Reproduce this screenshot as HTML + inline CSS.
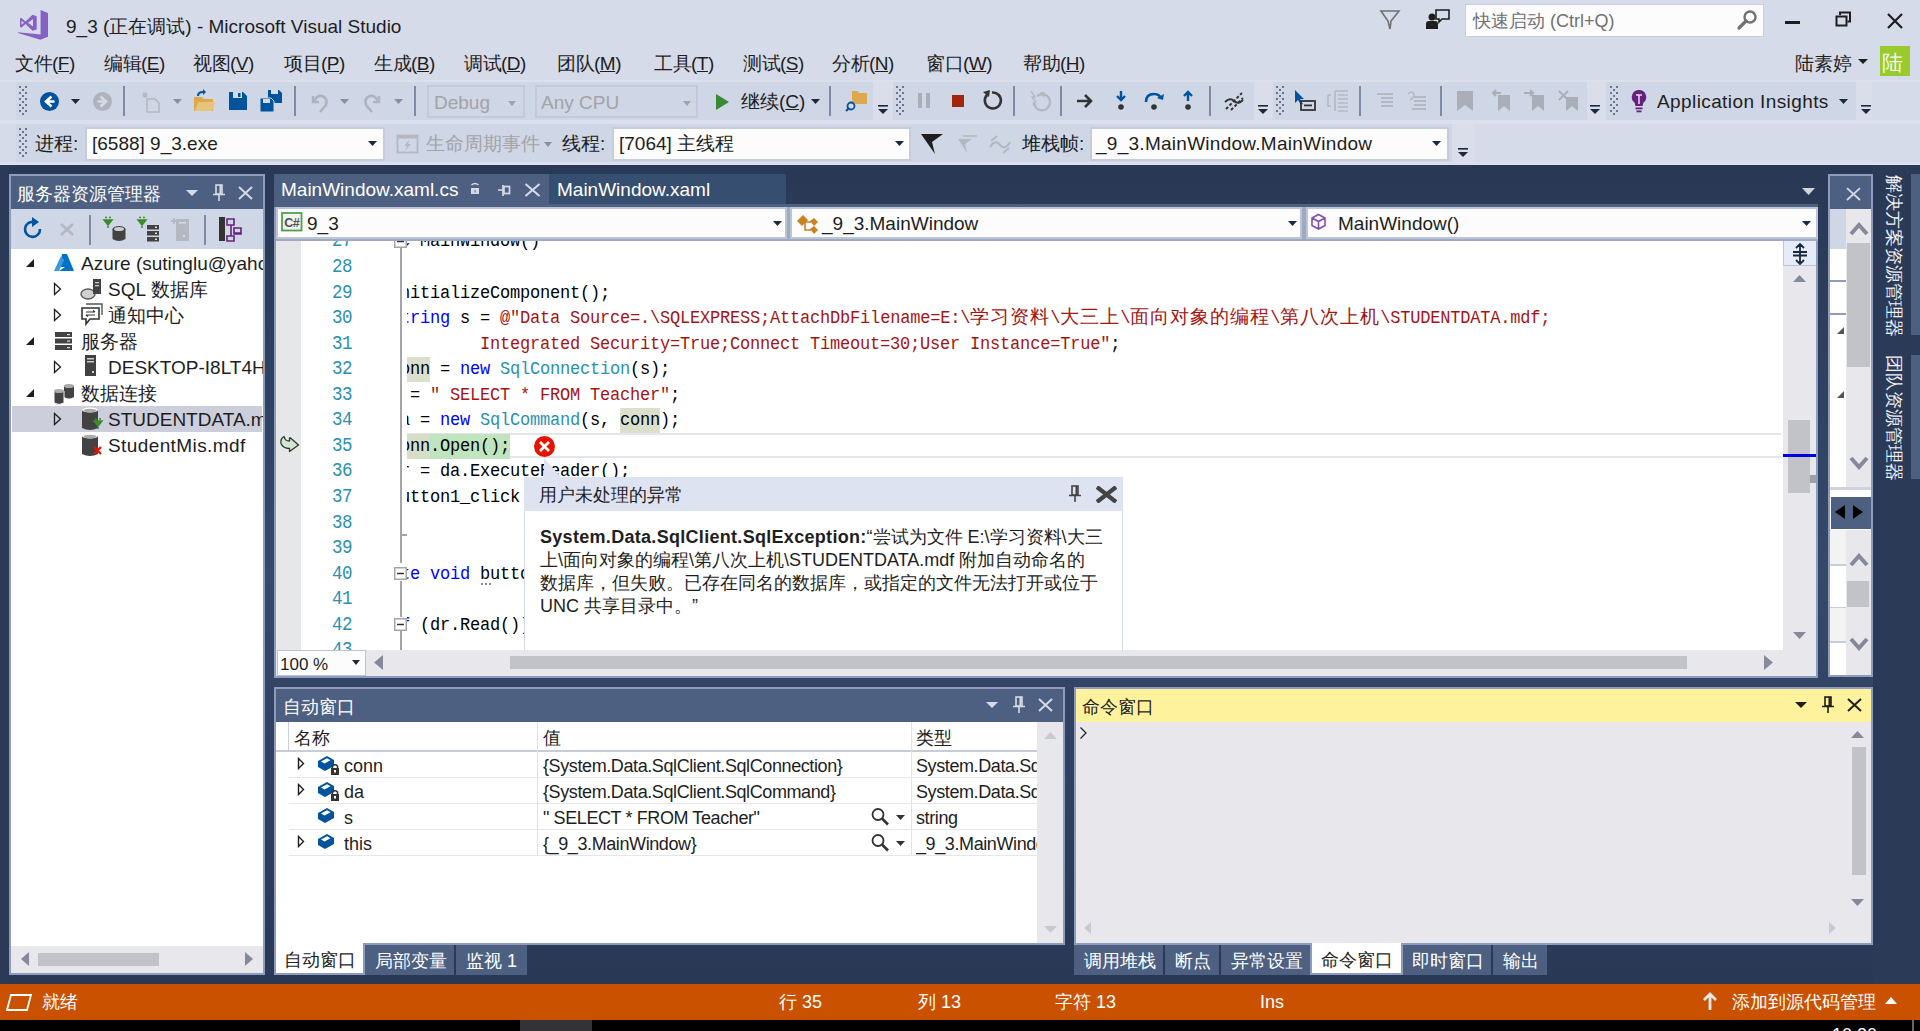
<!DOCTYPE html><html><head><meta charset="utf-8"><style>
html,body{margin:0;padding:0}
body{width:1920px;height:1031px;position:relative;overflow:hidden;background:#D6DBE9;font-family:'Liberation Sans',sans-serif}
body div, body svg{position:absolute}
.clip{overflow:hidden}
</style></head><body>
<div style="left:0px;top:165px;width:1920px;height:819px;background:linear-gradient(#293955 0%,#35496A 50%,#293955 100%);"></div>
<div style="left:0px;top:165px;width:9px;height:819px;background:#2A3A57;"></div>
<div style="left:1873px;top:165px;width:47px;height:819px;background:#2A3A57;"></div>
<div style="left:0px;top:984px;width:1920px;height:36px;background:#CA5100;"></div>
<div style="left:0px;top:1020px;width:1920px;height:11px;background:#000;"></div>
<div style="left:520px;top:1020px;width:72px;height:11px;background:#333337;"></div>
<svg style="left:14px;top:6px;" width="40" height="40" viewBox="0 0 40 40"><path fill="#8661C5" d="M26.6,4 L34,7 L34,30.7 L26.4,33.8 L4,27 L4.3,26.2 L26.6,28.5 Z"/><path fill="#8661C5" fill-rule="evenodd" d="M6,12.5 L7.5,12 L11.5,15.5 L18.5,8.8 L22.7,10.3 L22.7,23.5 L18.5,24.8 L11.5,18 L7.5,21.5 L6,21 Z M7.5,14.8 L10,16.8 L7.5,18.8 Z M14,16.8 L19,13 L19,20.5 Z"/></svg>
<div style="left:66px;top:16.92px;font-size:19px;line-height:19px;color:#1E1E1E;white-space:pre;">9_3 (正在调试) - Microsoft Visual Studio</div>
<svg style="left:1378px;top:8px;" width="24" height="24" viewBox="0 0 24 24"><path d="M3,3 L21,3 L13,13 L12,21 L10,13 Z" fill="none" stroke="#717171" stroke-width="1.6"/></svg>
<svg style="left:1425px;top:8px;" width="26" height="22" viewBox="0 0 26 22"><circle cx="7" cy="9" r="3.5" fill="#1E1E1E"/><path d="M1,21 L1,16 Q1,13 4,13 L10,13 Q13,13 13,16 L13,21 Z" fill="#1E1E1E"/><path d="M11,2 L24,2 L24,11 L17,11 L14,14 L14,11 L11,11 Z" fill="none" stroke="#1E1E1E" stroke-width="1.6"/></svg>
<div style="left:1465px;top:4px;width:299px;height:33px;background:#FCFCFC;box-sizing:border-box;border:1.5px solid #C9CEDC"></div>
<div style="left:1473px;top:11.76px;font-size:18px;line-height:18px;color:#717171;white-space:pre;">快速启动 (Ctrl+Q)</div>
<svg style="left:1736px;top:9px;" width="24" height="22" viewBox="0 0 24 22"><circle cx="14" cy="8" r="5.5" fill="none" stroke="#717171" stroke-width="2.4"/><path d="M10,12 L3,19" stroke="#717171" stroke-width="3.2" stroke-linecap="round"/></svg>
<div style="left:1785px;top:21px;width:15px;height:3px;background:#1E1E1E;"></div>
<svg style="left:1834px;top:10px;" width="20" height="18" viewBox="0 0 20 18"><rect x="2.5" y="6.5" width="10" height="9" fill="none" stroke="#1E1E1E" stroke-width="2"/><path d="M6,5 L6,2.5 L16,2.5 L16,11.5 L13.5,11.5" fill="none" stroke="#1E1E1E" stroke-width="2"/></svg>
<svg style="left:1885px;top:11px;" width="20" height="20" viewBox="0 0 20 20"><path d="M3,3 L17,17 M17,3 L3,17" stroke="#1E1E1E" stroke-width="2.2"/></svg>
<div style="left:15px;top:54.42px;font-size:19px;line-height:19px;color:#1E1E1E;white-space:pre;letter-spacing:-0.5px">文件(<u style="text-underline-offset:1px;text-decoration-thickness:1px">F</u>)</div>
<div style="left:104px;top:54.42px;font-size:19px;line-height:19px;color:#1E1E1E;white-space:pre;letter-spacing:-0.5px">编辑(<u style="text-underline-offset:1px;text-decoration-thickness:1px">E</u>)</div>
<div style="left:193px;top:54.42px;font-size:19px;line-height:19px;color:#1E1E1E;white-space:pre;letter-spacing:-0.5px">视图(<u style="text-underline-offset:1px;text-decoration-thickness:1px">V</u>)</div>
<div style="left:284px;top:54.42px;font-size:19px;line-height:19px;color:#1E1E1E;white-space:pre;letter-spacing:-0.5px">项目(<u style="text-underline-offset:1px;text-decoration-thickness:1px">P</u>)</div>
<div style="left:374px;top:54.42px;font-size:19px;line-height:19px;color:#1E1E1E;white-space:pre;letter-spacing:-0.5px">生成(<u style="text-underline-offset:1px;text-decoration-thickness:1px">B</u>)</div>
<div style="left:464px;top:54.42px;font-size:19px;line-height:19px;color:#1E1E1E;white-space:pre;letter-spacing:-0.5px">调试(<u style="text-underline-offset:1px;text-decoration-thickness:1px">D</u>)</div>
<div style="left:557px;top:54.42px;font-size:19px;line-height:19px;color:#1E1E1E;white-space:pre;letter-spacing:-0.5px">团队(<u style="text-underline-offset:1px;text-decoration-thickness:1px">M</u>)</div>
<div style="left:654px;top:54.42px;font-size:19px;line-height:19px;color:#1E1E1E;white-space:pre;letter-spacing:-0.5px">工具(<u style="text-underline-offset:1px;text-decoration-thickness:1px">T</u>)</div>
<div style="left:743px;top:54.42px;font-size:19px;line-height:19px;color:#1E1E1E;white-space:pre;letter-spacing:-0.5px">测试(<u style="text-underline-offset:1px;text-decoration-thickness:1px">S</u>)</div>
<div style="left:832px;top:54.42px;font-size:19px;line-height:19px;color:#1E1E1E;white-space:pre;letter-spacing:-0.5px">分析(<u style="text-underline-offset:1px;text-decoration-thickness:1px">N</u>)</div>
<div style="left:926px;top:54.42px;font-size:19px;line-height:19px;color:#1E1E1E;white-space:pre;letter-spacing:-0.5px">窗口(<u style="text-underline-offset:1px;text-decoration-thickness:1px">W</u>)</div>
<div style="left:1023px;top:54.42px;font-size:19px;line-height:19px;color:#1E1E1E;white-space:pre;letter-spacing:-0.5px">帮助(<u style="text-underline-offset:1px;text-decoration-thickness:1px">H</u>)</div>
<div style="left:1795px;top:54.42px;font-size:19px;line-height:19px;color:#1E1E1E;white-space:pre;">陆素婷</div>
<svg style="left:1858px;top:59px;" width="12" height="6" viewBox="0 0 12 6"><path d="M0,0 L10,0 L5,5 Z" fill="#1E1E1E"/></svg>
<div style="left:1880px;top:46px;width:30px;height:30px;background:#99CB2E;"></div>
<div style="left:1882px;top:52.22px;font-size:21px;line-height:21px;color:#F4FBE6;white-space:pre;">陆</div>
<div style="left:0px;top:120px;width:1920px;height:4px;background:#DCE0EC;"></div>
<div style="left:0px;top:80px;width:1920px;height:2px;background:#DCE0EC;"></div>
<div style="left:0px;top:162px;width:1920px;height:3px;background:#DCE0EC;"></div>
<div style="left:16px;top:82px;width:857px;height:38px;background:#CFD6E5;"></div>
<div style="left:873px;top:82px;width:20px;height:38px;background:#D9DEEA;"></div>
<div style="left:893px;top:82px;width:361px;height:38px;background:#CFD6E5;"></div>
<div style="left:1254px;top:82px;width:19px;height:38px;background:#D9DEEA;"></div>
<div style="left:1273px;top:82px;width:314px;height:38px;background:#CFD6E5;"></div>
<div style="left:1587px;top:82px;width:19px;height:38px;background:#D9DEEA;"></div>
<div style="left:1606px;top:82px;width:250px;height:38px;background:#CFD6E5;"></div>
<div style="left:1856px;top:82px;width:16px;height:38px;background:#D9DEEA;"></div>
<svg style="left:19px;top:86px;" width="8" height="30" viewBox="0 0 8 30"><rect x="0" y="0" width="2" height="2" fill="#6A7490"/><rect x="6" y="0" width="2" height="2" fill="#6A7490"/><rect x="3" y="3" width="2" height="2" fill="#6A7490"/><rect x="0" y="6" width="2" height="2" fill="#6A7490"/><rect x="6" y="6" width="2" height="2" fill="#6A7490"/><rect x="3" y="9" width="2" height="2" fill="#6A7490"/><rect x="0" y="12" width="2" height="2" fill="#6A7490"/><rect x="6" y="12" width="2" height="2" fill="#6A7490"/><rect x="3" y="15" width="2" height="2" fill="#6A7490"/><rect x="0" y="18" width="2" height="2" fill="#6A7490"/><rect x="6" y="18" width="2" height="2" fill="#6A7490"/><rect x="3" y="21" width="2" height="2" fill="#6A7490"/><rect x="0" y="24" width="2" height="2" fill="#6A7490"/><rect x="6" y="24" width="2" height="2" fill="#6A7490"/><rect x="3" y="27" width="2" height="2" fill="#6A7490"/></svg>
<svg style="left:896px;top:86px;" width="8" height="30" viewBox="0 0 8 30"><rect x="0" y="0" width="2" height="2" fill="#6A7490"/><rect x="6" y="0" width="2" height="2" fill="#6A7490"/><rect x="3" y="3" width="2" height="2" fill="#6A7490"/><rect x="0" y="6" width="2" height="2" fill="#6A7490"/><rect x="6" y="6" width="2" height="2" fill="#6A7490"/><rect x="3" y="9" width="2" height="2" fill="#6A7490"/><rect x="0" y="12" width="2" height="2" fill="#6A7490"/><rect x="6" y="12" width="2" height="2" fill="#6A7490"/><rect x="3" y="15" width="2" height="2" fill="#6A7490"/><rect x="0" y="18" width="2" height="2" fill="#6A7490"/><rect x="6" y="18" width="2" height="2" fill="#6A7490"/><rect x="3" y="21" width="2" height="2" fill="#6A7490"/><rect x="0" y="24" width="2" height="2" fill="#6A7490"/><rect x="6" y="24" width="2" height="2" fill="#6A7490"/><rect x="3" y="27" width="2" height="2" fill="#6A7490"/></svg>
<svg style="left:1276px;top:86px;" width="8" height="30" viewBox="0 0 8 30"><rect x="0" y="0" width="2" height="2" fill="#6A7490"/><rect x="6" y="0" width="2" height="2" fill="#6A7490"/><rect x="3" y="3" width="2" height="2" fill="#6A7490"/><rect x="0" y="6" width="2" height="2" fill="#6A7490"/><rect x="6" y="6" width="2" height="2" fill="#6A7490"/><rect x="3" y="9" width="2" height="2" fill="#6A7490"/><rect x="0" y="12" width="2" height="2" fill="#6A7490"/><rect x="6" y="12" width="2" height="2" fill="#6A7490"/><rect x="3" y="15" width="2" height="2" fill="#6A7490"/><rect x="0" y="18" width="2" height="2" fill="#6A7490"/><rect x="6" y="18" width="2" height="2" fill="#6A7490"/><rect x="3" y="21" width="2" height="2" fill="#6A7490"/><rect x="0" y="24" width="2" height="2" fill="#6A7490"/><rect x="6" y="24" width="2" height="2" fill="#6A7490"/><rect x="3" y="27" width="2" height="2" fill="#6A7490"/></svg>
<svg style="left:1610px;top:86px;" width="8" height="30" viewBox="0 0 8 30"><rect x="0" y="0" width="2" height="2" fill="#6A7490"/><rect x="6" y="0" width="2" height="2" fill="#6A7490"/><rect x="3" y="3" width="2" height="2" fill="#6A7490"/><rect x="0" y="6" width="2" height="2" fill="#6A7490"/><rect x="6" y="6" width="2" height="2" fill="#6A7490"/><rect x="3" y="9" width="2" height="2" fill="#6A7490"/><rect x="0" y="12" width="2" height="2" fill="#6A7490"/><rect x="6" y="12" width="2" height="2" fill="#6A7490"/><rect x="3" y="15" width="2" height="2" fill="#6A7490"/><rect x="0" y="18" width="2" height="2" fill="#6A7490"/><rect x="6" y="18" width="2" height="2" fill="#6A7490"/><rect x="3" y="21" width="2" height="2" fill="#6A7490"/><rect x="0" y="24" width="2" height="2" fill="#6A7490"/><rect x="6" y="24" width="2" height="2" fill="#6A7490"/><rect x="3" y="27" width="2" height="2" fill="#6A7490"/></svg>
<svg style="left:39px;top:91px;" width="21" height="21" viewBox="0 0 21 21"><circle cx="10.5" cy="10.5" r="9.5" fill="#00539C"/><path d="M12.5,5.5 L7,10.5 L12.5,15.5 M7.5,10.5 L15.5,10.5" stroke="#fff" stroke-width="2.6" fill="none"/></svg>
<svg style="left:71px;top:99px;" width="10" height="6" viewBox="0 0 10 6"><path d="M0,0 L9,0 L4.5,5 Z" fill="#1B293E"/></svg>
<svg style="left:92px;top:91px;" width="21" height="21" viewBox="0 0 21 21"><circle cx="10.5" cy="10.5" r="9.5" fill="#AEB3BE"/><path d="M8.5,5.5 L14,10.5 L8.5,15.5 M13.5,10.5 L5.5,10.5" stroke="#D6DAE3" stroke-width="2.6" fill="none"/></svg>
<div style="left:123px;top:86px;width:2px;height:30px;background:#7F8BA6;"></div>
<svg style="left:139px;top:90px;" width="24" height="24" viewBox="0 0 24 24"><path d="M8,9 L16,9 L20,13 L20,22 L8,22 Z" fill="none" stroke="#B4B8C2" stroke-width="1.6"/><path d="M6,2 L6,8 M3,5 L9,5 M4,3 L8,7 M8,3 L4,7" stroke="#B4B8C2" stroke-width="1.2"/></svg>
<svg style="left:173px;top:99px;" width="10" height="6" viewBox="0 0 10 6"><path d="M0,0 L9,0 L4.5,5 Z" fill="#8A8F9A"/></svg>
<svg style="left:192px;top:89px;" width="24" height="24" viewBox="0 0 24 24"><path d="M2,10 L2,22 L21,22 L21,10 L12,10 L10,8 L2,8 Z" fill="#DCA94F"/><path d="M3,22 L6,13 L23,13 L20,22 Z" fill="#E8C37A"/><path d="M5,7 Q5,2 11,2 L11,0 L14,3 L11,6 L11,4 Q7,4 7,7" fill="#00539C"/></svg>
<svg style="left:228px;top:91px;" width="20" height="20" viewBox="0 0 20 20"><path d="M1,1 L15,1 L19,5 L19,19 L1,19 Z" fill="#00539C"/><rect x="5" y="1" width="9" height="6" fill="#D6DBE9"/><rect x="10" y="2" width="2.5" height="4" fill="#00539C"/></svg>
<svg style="left:259px;top:89px;" width="25" height="24" viewBox="0 0 25 24"><path d="M9,1 L20,1 L23,4 L23,14 L9,14 Z" fill="#00539C"/><rect x="12" y="1" width="7" height="4" fill="#D6DBE9"/><path d="M1,9 L12,9 L15,12 L15,23 L1,23 Z" fill="#00539C" stroke="#CFD6E5" stroke-width="1"/><rect x="4" y="10" width="7" height="4" fill="#D6DBE9"/></svg>
<div style="left:294px;top:86px;width:2px;height:30px;background:#7F8BA6;"></div>
<svg style="left:308px;top:90px;" width="22" height="24" viewBox="0 0 22 24"><path d="M5,6 L5,12 L11,12" fill="none" stroke="#AEB3BE" stroke-width="2.4"/><path d="M6,11 Q9,5 14,6 Q20,8 18,15 L12,22" fill="none" stroke="#AEB3BE" stroke-width="2.6"/></svg>
<svg style="left:340px;top:99px;" width="10" height="6" viewBox="0 0 10 6"><path d="M0,0 L9,0 L4.5,5 Z" fill="#8A8F9A"/></svg>
<svg style="left:362px;top:90px;" width="22" height="24" viewBox="0 0 22 24"><path d="M17,6 L17,12 L11,12" fill="none" stroke="#AEB3BE" stroke-width="2.4"/><path d="M16,11 Q13,5 8,6 Q2,8 4,15 L10,22" fill="none" stroke="#AEB3BE" stroke-width="2.6"/></svg>
<svg style="left:394px;top:99px;" width="10" height="6" viewBox="0 0 10 6"><path d="M0,0 L9,0 L4.5,5 Z" fill="#8A8F9A"/></svg>
<div style="left:414px;top:86px;width:2px;height:30px;background:#7F8BA6;"></div>
<div style="left:427px;top:85px;width:98px;height:33px;background:transparent;box-sizing:border-box;border:2px solid #C3CADA"></div>
<div style="left:434px;top:92.92px;font-size:19px;line-height:19px;color:#A2A4A8;white-space:pre;">Debug</div>
<svg style="left:508px;top:101px;" width="9" height="6" viewBox="0 0 9 6"><path d="M0,0 L8,0 L4.0,5 Z" fill="#A2A4A8"/></svg>
<div style="left:535px;top:85px;width:163px;height:33px;background:transparent;box-sizing:border-box;border:2px solid #C3CADA"></div>
<div style="left:541px;top:92.92px;font-size:19px;line-height:19px;color:#A2A4A8;white-space:pre;">Any CPU</div>
<svg style="left:683px;top:101px;" width="9" height="6" viewBox="0 0 9 6"><path d="M0,0 L8,0 L4.0,5 Z" fill="#A2A4A8"/></svg>
<svg style="left:715px;top:93px;" width="16" height="18" viewBox="0 0 16 18"><path d="M1,1 L14,9 L1,17 Z" fill="#388A34"/></svg>
<div style="left:741px;top:92.42px;font-size:19px;line-height:19px;color:#1E1E1E;white-space:pre;">继续(<u style="text-underline-offset:1px;text-decoration-thickness:1px">C</u>)</div>
<svg style="left:811px;top:99px;" width="10" height="6" viewBox="0 0 10 6"><path d="M0,0 L9,0 L4.5,5 Z" fill="#1B293E"/></svg>
<div style="left:829px;top:86px;width:2px;height:30px;background:#7F8BA6;"></div>
<svg style="left:845px;top:89px;" width="24" height="24" viewBox="0 0 24 24"><path d="M7,4 L7,15 L22,15 L22,4 L14,4 L13,2 L7,2 Z" fill="#DCA94F"/><circle cx="6" cy="17" r="3.5" fill="#D6DBE9" stroke="#00539C" stroke-width="1.8"/><path d="M3.5,19.5 L1,22" stroke="#00539C" stroke-width="2.2"/></svg>
<svg style="left:877px;top:105px;" width="12" height="10" viewBox="0 0 12 10"><rect x="1" y="0" width="10" height="1.6" fill="#1B293E"/><path d="M1,4 L11,4 L6,9 Z" fill="#1B293E"/></svg>
<div style="left:918px;top:93px;width:4px;height:15px;background:#A9AEB9;"></div>
<div style="left:926px;top:93px;width:4px;height:15px;background:#A9AEB9;"></div>
<div style="left:952px;top:95px;width:12px;height:12px;background:#A1260D;"></div>
<svg style="left:981px;top:89px;" width="23" height="23" viewBox="0 0 23 23"><path d="M6,6 A8,8 0 1 0 11,3.5" fill="none" stroke="#333" stroke-width="2.6"/><path d="M2,3 L9,1 L8,8 Z" fill="#333"/></svg>
<div style="left:1013px;top:86px;width:2px;height:30px;background:#7F8BA6;"></div>
<svg style="left:1027px;top:89px;" width="24" height="24" viewBox="0 0 24 24"><path d="M10,7 A8,8 0 1 1 7,13" fill="none" stroke="#B4B8C2" stroke-width="2.4"/><path d="M13,3 L18,3 L17,9 Z" fill="#B4B8C2"/><path d="M4,2 L8,8 L5,8 L9,13" fill="none" stroke="#B4B8C2" stroke-width="1.4"/></svg>
<div style="left:1060px;top:86px;width:2px;height:30px;background:#7F8BA6;"></div>
<svg style="left:1075px;top:92px;" width="20" height="18" viewBox="0 0 20 18"><path d="M2,9 L16,9 M10,3 L16,9 L10,15" fill="none" stroke="#333" stroke-width="2.6"/></svg>
<svg style="left:1111px;top:89px;" width="20" height="24" viewBox="0 0 20 24"><path d="M10,2 L10,11 M6,7 L10,11 L14,7" fill="none" stroke="#00539C" stroke-width="2.4"/><circle cx="10" cy="18" r="2.8" fill="#333"/></svg>
<svg style="left:1143px;top:89px;" width="22" height="24" viewBox="0 0 22 24"><path d="M3,13 Q3,5 11,5 Q17,5 18,10" fill="none" stroke="#00539C" stroke-width="2.6"/><path d="M14,9 L20,11 L21,5 Z" fill="#00539C"/><circle cx="11" cy="18" r="2.8" fill="#333"/></svg>
<svg style="left:1178px;top:89px;" width="20" height="24" viewBox="0 0 20 24"><path d="M10,12 L10,3 M6,7 L10,3 L14,7" fill="none" stroke="#00539C" stroke-width="2.4"/><circle cx="10" cy="18" r="2.8" fill="#333"/></svg>
<div style="left:1209px;top:86px;width:2px;height:30px;background:#7F8BA6;"></div>
<svg style="left:1222px;top:89px;" width="24" height="24" viewBox="0 0 24 24"><path d="M4,20 L20,4 M9,21 L21,9" stroke="#333" stroke-width="2" stroke-dasharray="3,2"/><path d="M3,13 Q8,8 12,12 Q16,16 21,11" fill="none" stroke="#333" stroke-width="2"/></svg>
<svg style="left:1257px;top:105px;" width="12" height="10" viewBox="0 0 12 10"><rect x="1" y="0" width="10" height="1.6" fill="#1B293E"/><path d="M1,4 L11,4 L6,9 Z" fill="#1B293E"/></svg>
<svg style="left:1293px;top:89px;" width="24" height="24" viewBox="0 0 24 24"><path d="M2,1 L2,14 L5,11 L8,16 L10,15 L7,10 L11,10 Z" fill="#00539C"/><rect x="8" y="12" width="14" height="9" fill="none" stroke="#333" stroke-width="1.8"/><rect x="11" y="15.5" width="8" height="1.8" fill="#333"/></svg>
<svg style="left:1326px;top:89px;" width="24" height="24" viewBox="0 0 24 24"><path d="M2,6 L2,17 L5,17 M2,6 L5,6" fill="none" stroke="#B4B8C2" stroke-width="1.6"/><path d="M9,2 L22,2 M9,2 L9,22 M12,6 L22,6 M12,10 L22,10 M12,14 L22,14 M12,18 L22,18 M12,22 L22,22" stroke="#B4B8C2" stroke-width="1.6"/></svg>
<div style="left:1359px;top:86px;width:2px;height:30px;background:#7F8BA6;"></div>
<svg style="left:1376px;top:92px;" width="19" height="18" viewBox="0 0 19 18"><path d="M1,2 L17,2 M5,6 L17,6 M5,10 L17,10 M5,14 L17,14" stroke="#B4B8C2" stroke-width="1.8"/></svg>
<svg style="left:1406px;top:89px;" width="22" height="24" viewBox="0 0 22 24"><path d="M8,8 L20,8 M8,12 L20,12 M8,16 L20,16 M6,20 L20,20" stroke="#B4B8C2" stroke-width="1.8"/><path d="M2,5 Q6,1 8,5 Q8,9 4,11" fill="none" stroke="#B4B8C2" stroke-width="1.6"/></svg>
<div style="left:1440px;top:86px;width:2px;height:30px;background:#7F8BA6;"></div>
<svg style="left:1456px;top:90px;" width="18" height="22" viewBox="0 0 18 22"><path d="M1,1 L17,1 L17,21 L9,15 L1,21 Z" fill="#A9AEB8"/></svg>
<svg style="left:1491px;top:89px;" width="20" height="24" viewBox="0 0 20 24"><path d="M7,6 L19,6 L19,22 L13,17 L7,22 Z" fill="#A9AEB8"/><path d="M10,4 L2,4 M5,1 L2,4 L5,7" fill="none" stroke="#A9AEB8" stroke-width="2"/></svg>
<svg style="left:1523px;top:89px;" width="22" height="24" viewBox="0 0 22 24"><path d="M9,6 L21,6 L21,22 L15,17 L9,22 Z" fill="#A9AEB8"/><path d="M1,4 L10,4 M7,1 L10,4 L7,7" fill="none" stroke="#A9AEB8" stroke-width="2"/></svg>
<svg style="left:1557px;top:89px;" width="22" height="24" viewBox="0 0 22 24"><path d="M9,8 L21,8 L21,22 L15,17 L9,22 Z" fill="#A9AEB8"/><path d="M2,2 L11,11 M11,2 L2,11" stroke="#A9AEB8" stroke-width="1.8"/></svg>
<svg style="left:1589px;top:105px;" width="12" height="10" viewBox="0 0 12 10"><rect x="1" y="0" width="10" height="1.6" fill="#1B293E"/><path d="M1,4 L11,4 L6,9 Z" fill="#1B293E"/></svg>
<svg style="left:1630px;top:89px;" width="18" height="24" viewBox="0 0 18 24"><path d="M9,1 A7,7 0 0 1 13.5,13.5 L12.5,17 L5.5,17 L4.5,13.5 A7,7 0 0 1 9,1 Z" fill="#68217A"/><path d="M6,6 L12,6 M9,6 L9,15" stroke="#E8D9EE" stroke-width="1.5"/><rect x="5.5" y="18.5" width="7" height="1.8" fill="#68217A"/><rect x="6.5" y="21.5" width="5" height="1.8" fill="#68217A"/></svg>
<div style="left:1657px;top:92.42px;font-size:19px;line-height:19px;color:#1E1E1E;white-space:pre;letter-spacing:0.4px">Application Insights</div>
<svg style="left:1839px;top:99px;" width="10" height="6" viewBox="0 0 10 6"><path d="M0,0 L9,0 L4.5,5 Z" fill="#1B293E"/></svg>
<svg style="left:1860px;top:105px;" width="12" height="10" viewBox="0 0 12 10"><rect x="1" y="0" width="10" height="1.6" fill="#1B293E"/><path d="M1,4 L11,4 L6,9 Z" fill="#1B293E"/></svg>
<div style="left:16px;top:124px;width:1436px;height:38px;background:#CFD6E5;"></div>
<div style="left:1452px;top:124px;width:23px;height:38px;background:#D9DEEA;"></div>
<svg style="left:19px;top:128px;" width="8" height="30" viewBox="0 0 8 30"><rect x="0" y="0" width="2" height="2" fill="#6A7490"/><rect x="6" y="0" width="2" height="2" fill="#6A7490"/><rect x="3" y="3" width="2" height="2" fill="#6A7490"/><rect x="0" y="6" width="2" height="2" fill="#6A7490"/><rect x="6" y="6" width="2" height="2" fill="#6A7490"/><rect x="3" y="9" width="2" height="2" fill="#6A7490"/><rect x="0" y="12" width="2" height="2" fill="#6A7490"/><rect x="6" y="12" width="2" height="2" fill="#6A7490"/><rect x="3" y="15" width="2" height="2" fill="#6A7490"/><rect x="0" y="18" width="2" height="2" fill="#6A7490"/><rect x="6" y="18" width="2" height="2" fill="#6A7490"/><rect x="3" y="21" width="2" height="2" fill="#6A7490"/><rect x="0" y="24" width="2" height="2" fill="#6A7490"/><rect x="6" y="24" width="2" height="2" fill="#6A7490"/><rect x="3" y="27" width="2" height="2" fill="#6A7490"/></svg>
<div style="left:35px;top:134.42px;font-size:19px;line-height:19px;color:#1E1E1E;white-space:pre;">进程:</div>
<div style="left:85px;top:127px;width:300px;height:34px;background:#FCFCFC;box-sizing:border-box;border:2px solid #C6CCDA"></div>
<div style="left:92px;top:134.42px;font-size:19px;line-height:19px;color:#1E1E1E;white-space:pre;">[6588] 9_3.exe</div>
<svg style="left:368px;top:141px;" width="10" height="6" viewBox="0 0 10 6"><path d="M0,0 L9,0 L4.5,5 Z" fill="#1B293E"/></svg>
<svg style="left:396px;top:134px;" width="24" height="21" viewBox="0 0 24 21"><rect x="1.5" y="1.5" width="20" height="17" fill="none" stroke="#B4B8C2" stroke-width="1.8"/><rect x="1.5" y="1.5" width="20" height="3" fill="#B4B8C2"/><path d="M13,6 L8,12 L11,12 L9,17 L15,10 L12,10 Z" fill="#B4B8C2"/></svg>
<div style="left:426px;top:134.42px;font-size:19px;line-height:19px;color:#A2A4A8;white-space:pre;">生命周期事件</div>
<svg style="left:544px;top:142px;" width="9" height="6" viewBox="0 0 9 6"><path d="M0,0 L8,0 L4.0,5 Z" fill="#8A8F9A"/></svg>
<div style="left:562px;top:134.42px;font-size:19px;line-height:19px;color:#1E1E1E;white-space:pre;">线程:</div>
<div style="left:612px;top:127px;width:299px;height:34px;background:#FCFCFC;box-sizing:border-box;border:2px solid #C6CCDA"></div>
<div style="left:619px;top:134.42px;font-size:19px;line-height:19px;color:#1E1E1E;white-space:pre;">[7064] 主线程</div>
<svg style="left:895px;top:141px;" width="10" height="6" viewBox="0 0 10 6"><path d="M0,0 L9,0 L4.5,5 Z" fill="#1B293E"/></svg>
<svg style="left:920px;top:133px;" width="25" height="23" viewBox="0 0 25 23"><path d="M1,1 L23,1 L12,9 L15,21 Z" fill="#1E1E1E"/></svg>
<svg style="left:955px;top:133px;" width="24" height="22" viewBox="0 0 24 22"><path d="M3,6 L17,6 L10,11 L12,20 Z" fill="#B4B8C2"/><path d="M8,3 L22,3" stroke="#B4B8C2" stroke-width="1.6"/></svg>
<svg style="left:988px;top:133px;" width="25" height="22" viewBox="0 0 25 22"><path d="M2,14 Q7,6 12,12 Q17,18 22,9" fill="none" stroke="#B4B8C2" stroke-width="2.2"/><path d="M3,8 L9,3 M15,20 L21,15" stroke="#B4B8C2" stroke-width="2"/></svg>
<div style="left:1022px;top:134.42px;font-size:19px;line-height:19px;color:#1E1E1E;white-space:pre;">堆栈帧:</div>
<div style="left:1090px;top:127px;width:359px;height:34px;background:#FCFCFC;box-sizing:border-box;border:2px solid #C6CCDA"></div>
<div style="left:1096px;top:134.42px;font-size:19px;line-height:19px;color:#1E1E1E;white-space:pre;letter-spacing:0.27px">_9_3.MainWindow.MainWindow</div>
<svg style="left:1432px;top:141px;" width="10" height="6" viewBox="0 0 10 6"><path d="M0,0 L9,0 L4.5,5 Z" fill="#1B293E"/></svg>
<svg style="left:1457px;top:148px;" width="12" height="10" viewBox="0 0 12 10"><rect x="1" y="0" width="10" height="1.6" fill="#1B293E"/><path d="M1,4 L11,4 L6,9 Z" fill="#1B293E"/></svg>
<div style="left:9px;top:174px;width:256px;height:801px;background:#8E9BBC;"></div>
<div style="left:11px;top:176px;width:252px;height:33px;background:#4D6082;"></div>
<div style="left:17px;top:185.26px;font-size:18px;line-height:18px;color:#FFFFFF;white-space:pre;">服务器资源管理器</div>
<svg style="left:186px;top:190px;" width="13" height="7" viewBox="0 0 13 7"><path d="M0,0 L12,0 L6,6 Z" fill="#D5DAE6"/></svg>
<svg style="left:213px;top:184px;" width="12" height="18" viewBox="0 0 12 18"><rect x="3" y="1" width="6" height="9" fill="none" stroke="#D5DAE6" stroke-width="1.6"/><rect x="6.5" y="1" width="2" height="9" fill="#D5DAE6"/><path d="M0,10.5 L12,10.5 M6,10 L6,17" stroke="#D5DAE6" stroke-width="1.6"/></svg>
<svg style="left:238px;top:185px;" width="15" height="15" viewBox="0 0 15 15"><path d="M1,2.1 L14,14.0 M14,2.1 L1,14.0" stroke="#D5DAE6" stroke-width="2"/></svg>
<div style="left:11px;top:209px;width:252px;height:40px;background:#CFD6E5;"></div>
<svg style="left:23px;top:216px;" width="22" height="26" viewBox="0 0 22 26"><path d="M17,13 A7.5,7.5 0 1 1 11,6" fill="none" stroke="#00539C" stroke-width="2.6"/><path d="M9,1 L16,6 L9,11 Z" fill="#00539C"/></svg>
<svg style="left:60px;top:222px;" width="14" height="14" viewBox="0 0 14 14"><path d="M1,2.0 L13,13.0 M13,2.0 L1,13.0" stroke="#B4B8C2" stroke-width="2.6"/></svg>
<div style="left:89px;top:215px;width:2px;height:30px;background:#7F8BA6;"></div>
<svg style="left:102px;top:215px;" width="26" height="28" viewBox="0 0 26 28"><path d="M2,5 L10,5 L6,10 Z M6,9 L6,13" stroke="#3C8B2E" fill="#3C8B2E" stroke-width="1.5"/><circle cx="4" cy="2.5" r="1" fill="#3C8B2E"/><circle cx="8" cy="2.5" r="1" fill="#3C8B2E"/><ellipse cx="17" cy="14" rx="6.5" ry="3" fill="#424242"/><path d="M10.5,14 L10.5,24 Q17,28 23.5,24 L23.5,14" fill="#424242"/><ellipse cx="17" cy="14" rx="5" ry="2" fill="#C8CCD5"/></svg>
<svg style="left:136px;top:215px;" width="26" height="28" viewBox="0 0 26 28"><path d="M2,5 L10,5 L6,10 Z M6,9 L6,13" stroke="#3C8B2E" fill="#3C8B2E" stroke-width="1.5"/><circle cx="4" cy="2.5" r="1" fill="#3C8B2E"/><circle cx="8" cy="2.5" r="1" fill="#3C8B2E"/><rect x="11" y="10" width="12" height="4.5" fill="#424242"/><rect x="11" y="16" width="12" height="4.5" fill="#424242"/><rect x="11" y="22" width="12" height="4.5" fill="#424242"/><rect x="19" y="11.5" width="2" height="1.5" fill="#ddd"/><rect x="19" y="17.5" width="2" height="1.5" fill="#ddd"/><rect x="19" y="23.5" width="2" height="1.5" fill="#ddd"/></svg>
<svg style="left:170px;top:215px;" width="22" height="28" viewBox="0 0 22 28"><rect x="6" y="4" width="13" height="22" fill="#B4B8C2"/><path d="M1,6 L7,6 M4,3 L4,9" stroke="#B4B8C2" stroke-width="1.8"/><rect x="9" y="7" width="7" height="1.5" fill="#D6DAE3"/><rect x="13" y="20" width="2" height="2" fill="#D6DAE3"/></svg>
<div style="left:204px;top:215px;width:2px;height:30px;background:#7F8BA6;"></div>
<svg style="left:218px;top:216px;" width="26" height="26" viewBox="0 0 26 26"><rect x="1" y="1" width="6" height="24" fill="#333"/><path d="M9,3 L16,3 L16,9 L9,9 Z M13,9 L13,20 L16,20 M16,12 L23,12 L23,18 L16,18 Z M16,17 L23,17 M9,20 L16,20 L16,25 L9,25 Z" fill="none" stroke="#68217A" stroke-width="1.6"/></svg>
<div style="left:11px;top:249px;width:252px;height:697px;background:#FFFFFF;"></div>
<div style="left:12px;top:406px;width:250px;height:26px;background:#CCCEDB;"></div>
<svg style="left:25px;top:258px;" width="10" height="10" viewBox="0 0 10 10"><path d="M9,1 L9,9 L1,9 Z" fill="#1E1E1E"/></svg>
<svg style="left:53px;top:254px;" width="22" height="18" viewBox="0 0 22 18"><path d="M9,0 L14,0 L21,17 L6,17 L12,13 L7,13 Z" fill="#0072C6"/><path d="M8,2 L1,17 L6,17 L11,6 Z" fill="#3999E0"/></svg>
<div class="clip" style="left:81px;top:248.42px;width:182px;height:31px"><div style="left:0;top:6px;font-size:19px;line-height:19px;color:#1E1E1E;white-space:pre">Azure (sutinglu@yahoo.com)</div></div>
<svg style="left:53px;top:282px;" width="9" height="14" viewBox="0 0 9 14"><path d="M1.5,1.5 L7.5,7 L1.5,12.5 Z" fill="none" stroke="#1E1E1E" stroke-width="1.3"/></svg>
<svg style="left:80px;top:277px;" width="24" height="24" viewBox="0 0 24 24"><ellipse cx="8" cy="17" rx="7" ry="5" fill="#D0D0D0" stroke="#555" stroke-width="1.4"/><rect x="13" y="2" width="8" height="15" fill="#424242"/><rect x="15" y="5" width="4" height="1.3" fill="#ccc"/><rect x="15" y="8" width="4" height="1.3" fill="#ccc"/></svg>
<div style="left:108px;top:280.42px;font-size:19px;line-height:19px;color:#1E1E1E;white-space:pre;">SQL 数据库</div>
<svg style="left:53px;top:308px;" width="9" height="14" viewBox="0 0 9 14"><path d="M1.5,1.5 L7.5,7 L1.5,12.5 Z" fill="none" stroke="#1E1E1E" stroke-width="1.3"/></svg>
<svg style="left:80px;top:303px;" width="24" height="24" viewBox="0 0 24 24"><path d="M6,1 L22,1 L22,12" fill="none" stroke="#555" stroke-width="1.4"/><path d="M2,5 L19,5 L19,16 L10,16 L6,21 L6,16 L2,16 Z" fill="none" stroke="#333" stroke-width="1.6"/><path d="M6,9 L15,9 M13,7.5 L15,9 M6,12 L15,12 M6,12 L8,13.5" stroke="#333" stroke-width="1.2"/></svg>
<div style="left:108px;top:306.42px;font-size:19px;line-height:19px;color:#1E1E1E;white-space:pre;">通知中心</div>
<svg style="left:25px;top:336px;" width="10" height="10" viewBox="0 0 10 10"><path d="M9,1 L9,9 L1,9 Z" fill="#1E1E1E"/></svg>
<svg style="left:53px;top:330px;" width="22" height="22" viewBox="0 0 22 22"><rect x="2" y="2" width="17" height="5" fill="#424242"/><rect x="2" y="8.5" width="17" height="5" fill="#424242"/><rect x="2" y="15" width="17" height="5" fill="#424242"/><rect x="14" y="4" width="3" height="1.2" fill="#ddd"/><rect x="14" y="10.5" width="3" height="1.2" fill="#ddd"/><rect x="14" y="17" width="3" height="1.2" fill="#ddd"/></svg>
<div style="left:81px;top:332.42px;font-size:19px;line-height:19px;color:#1E1E1E;white-space:pre;">服务器</div>
<svg style="left:53px;top:360px;" width="9" height="14" viewBox="0 0 9 14"><path d="M1.5,1.5 L7.5,7 L1.5,12.5 Z" fill="none" stroke="#1E1E1E" stroke-width="1.3"/></svg>
<svg style="left:84px;top:354px;" width="14" height="24" viewBox="0 0 14 24"><rect x="1" y="1" width="11" height="21" fill="#424242"/><rect x="3" y="4" width="7" height="1.5" fill="#ccc"/><rect x="3" y="7" width="7" height="1.5" fill="#ccc"/><rect x="8" y="17" width="2" height="2" fill="#ccc"/></svg>
<div class="clip" style="left:108px;top:352.42px;width:155px;height:31px"><div style="left:0;top:6px;font-size:19px;line-height:19px;color:#1E1E1E;white-space:pre">DESKTOP-I8LT4HUL</div></div>
<svg style="left:25px;top:388px;" width="10" height="10" viewBox="0 0 10 10"><path d="M9,1 L9,9 L1,9 Z" fill="#1E1E1E"/></svg>
<svg style="left:52px;top:381px;" width="24" height="24" viewBox="0 0 24 24"><path d="M12,5 Q17,2 22,5 L22,16 Q17,19 12,16 Z" fill="#424242"/><ellipse cx="17" cy="5" rx="5" ry="2" fill="#aaa"/><path d="M2,10 Q7,7 12,10 L12,22 Q7,25 2,22 Z" fill="#424242" stroke="#fff" stroke-width="1"/><ellipse cx="7" cy="10" rx="5" ry="2" fill="#aaa"/></svg>
<div style="left:81px;top:384.42px;font-size:19px;line-height:19px;color:#1E1E1E;white-space:pre;">数据连接</div>
<svg style="left:53px;top:412px;" width="9" height="14" viewBox="0 0 9 14"><path d="M1.5,1.5 L7.5,7 L1.5,12.5 Z" fill="none" stroke="#1E1E1E" stroke-width="1.3"/></svg>
<svg style="left:80px;top:406px;" width="24" height="26" viewBox="0 0 24 26"><path d="M2,4 Q10,0 18,4 L18,22 Q10,26 2,22 Z" fill="#424242"/><ellipse cx="10" cy="4" rx="8" ry="2.5" fill="#fff"/><ellipse cx="10" cy="4.5" rx="6.5" ry="1.8" fill="#aaa"/><path d="M14,15 L22,15 L18,20 Z M18,19 L18,23 M16,12 L16,14 M20,12 L20,14" stroke="#3C8B2E" fill="#3C8B2E" stroke-width="1.5"/></svg>
<div class="clip" style="left:108px;top:404.42px;width:155px;height:31px"><div style="left:0;top:6px;font-size:19px;line-height:19px;color:#1E1E1E;white-space:pre">STUDENTDATA.mdf</div></div>
<svg style="left:80px;top:432px;" width="24" height="26" viewBox="0 0 24 26"><path d="M2,4 Q10,0 18,4 L18,22 Q10,26 2,22 Z" fill="#424242"/><ellipse cx="10" cy="4" rx="8" ry="2.5" fill="#fff"/><ellipse cx="10" cy="4.5" rx="6.5" ry="1.8" fill="#aaa"/><path d="M14,15 L21,22 M21,15 L14,22" stroke="#E51400" stroke-width="2.4"/></svg>
<div style="left:108px;top:436.42px;font-size:19px;line-height:19px;color:#1E1E1E;white-space:pre;letter-spacing:0.4px">StudentMis.mdf</div>
<div style="left:11px;top:946px;width:252px;height:27px;background:#E8E8EC;"></div>
<div style="left:38px;top:953px;width:121px;height:13px;background:#C2C3C9;"></div>
<svg style="left:21px;top:952px;" width="9" height="15" viewBox="0 0 9 15"><path d="M8,0 L8,14 L0,7 Z" fill="#868999"/></svg>
<svg style="left:245px;top:952px;" width="9" height="15" viewBox="0 0 9 15"><path d="M0,0 L0,14 L8,7 Z" fill="#868999"/></svg>
<div style="left:274px;top:174px;width:275px;height:30px;background:#4D6082;"></div>
<div style="left:281px;top:180.42px;font-size:19px;line-height:19px;color:#FFFFFF;white-space:pre;">MainWindow.xaml.cs</div>
<svg style="left:470px;top:182px;" width="11" height="13" viewBox="0 0 11 13"><path d="M1.5,3 Q5,0 8.5,3" fill="none" stroke="#D5DAE6" stroke-width="1.6"/><rect x="1" y="6" width="8" height="6" fill="#D5DAE6"/><rect x="4.5" y="8" width="1" height="2.5" fill="#4D6082"/></svg>
<svg style="left:497px;top:184px;" width="14" height="13" viewBox="0 0 14 13"><path d="M1,6 L6,6 M6,1 L6,12" stroke="#D5DAE6" stroke-width="1.7"/><rect x="7" y="2.5" width="5.5" height="7" fill="none" stroke="#D5DAE6" stroke-width="1.7"/></svg>
<svg style="left:524px;top:183px;" width="17" height="14" viewBox="0 0 17 14"><path d="M1.5,1 L15.5,13 M15.5,1 L1.5,13" stroke="#D5DAE6" stroke-width="2.1"/></svg>
<div style="left:549px;top:174px;width:237px;height:30px;background:#364E6F;"></div>
<div style="left:557px;top:180.42px;font-size:19px;line-height:19px;color:#FFFFFF;white-space:pre;">MainWindow.xaml</div>
<svg style="left:1802px;top:188px;" width="14" height="8" viewBox="0 0 14 8"><path d="M0,0 L13,0 L6.5,7 Z" fill="#CED4DE"/></svg>
<div style="left:274px;top:204px;width:1544px;height:3px;background:#4D6082;"></div>
<div style="left:274px;top:207px;width:1544px;height:471px;background:#8E9BBC;"></div>
<div style="left:276px;top:207px;width:1542px;height:34px;background:#9EAABF;"></div>
<div style="left:276px;top:207px;width:511px;height:32px;background:#FCFCFC;box-sizing:border-box;border:2px solid #BCC5D8"></div>
<div style="left:790px;top:207px;width:512px;height:32px;background:#FCFCFC;box-sizing:border-box;border:2px solid #BCC5D8"></div>
<div style="left:1306px;top:207px;width:512px;height:32px;background:#FCFCFC;box-sizing:border-box;border:2px solid #BCC5D8"></div>
<svg style="left:281px;top:212px;" width="23" height="20" viewBox="0 0 23 20"><rect x="1" y="1" width="19.5" height="17.5" fill="#F2F2F2" stroke="#4DA34C" stroke-width="1.8"/><text x="10.75" y="15" font-size="12.5" font-family="Liberation Sans" font-weight="bold" fill="#505050" text-anchor="middle" letter-spacing="-0.5">C#</text></svg>
<div style="left:307px;top:213.92px;font-size:19px;line-height:19px;color:#1E1E1E;white-space:pre;">9_3</div>
<svg style="left:773px;top:221px;" width="10" height="6" viewBox="0 0 10 6"><path d="M0,0 L9,0 L4.5,5 Z" fill="#1B293E"/></svg>
<svg style="left:795px;top:212px;" width="25" height="22" viewBox="0 0 25 22"><path d="M2,9 L8,3 L13,8 L7,14 Z" fill="#CA8121"/><path d="M15,9 L19,6 L23,10 L19,14 Z M15,17 L19,14 L23,18 L19,22 Z" fill="#CA8121"/><path d="M10,10 L10,18 L16,18 M10,10 L16,10" fill="none" stroke="#CA8121" stroke-width="1.6"/></svg>
<div style="left:822px;top:213.92px;font-size:19px;line-height:19px;color:#1E1E1E;white-space:pre;">_9_3.MainWindow</div>
<svg style="left:1288px;top:221px;" width="10" height="6" viewBox="0 0 10 6"><path d="M0,0 L9,0 L4.5,5 Z" fill="#1B293E"/></svg>
<svg style="left:1310px;top:213px;" width="17" height="18" viewBox="0 0 17 18"><path d="M8.5,1.5 L15,5 L15,12.5 L8.5,16 L2,12.5 L2,5 Z M2,5 L8.5,8.5 L15,5 M8.5,8.5 L8.5,16" fill="none" stroke="#7D4FB5" stroke-width="1.6"/></svg>
<div style="left:1338px;top:213.92px;font-size:19px;line-height:19px;color:#1E1E1E;white-space:pre;">MainWindow()</div>
<svg style="left:1802px;top:221px;" width="10" height="6" viewBox="0 0 10 6"><path d="M0,0 L9,0 L4.5,5 Z" fill="#1B293E"/></svg>
<div style="left:276px;top:241px;width:1507px;height:409px;background:#FFFFFF;"></div>
<div style="left:276px;top:241px;width:25px;height:409px;background:#E6E7E8;"></div>
<div style="left:1783px;top:241px;width:33px;height:409px;background:#E8E8EC;"></div>
<div style="left:1783px;top:241px;width:33px;height:25px;background:#E6EBF9;box-sizing:border-box;border-left:1px solid #BCC5D8;border-bottom:1px solid #BCC5D8"></div>
<svg style="left:1791px;top:243px;" width="18" height="22" viewBox="0 0 18 22"><path d="M9,1 L9,21 M5,5 L9,1 L13,5 M5,17 L9,21 L13,17 M2,9 L16,9 M2,12.5 L16,12.5" fill="none" stroke="#1B293E" stroke-width="1.8"/></svg>
<svg style="left:1793px;top:275px;" width="14" height="8" viewBox="0 0 14 8"><path d="M0,7 L13,7 L6.5,0 Z" fill="#868999"/></svg>
<svg style="left:1793px;top:632px;" width="14" height="8" viewBox="0 0 14 8"><path d="M0,0 L13,0 L6.5,7 Z" fill="#868999"/></svg>
<div style="left:1788px;top:420px;width:22px;height:73px;background:#C2C3C9;"></div>
<div style="left:1783px;top:454px;width:33px;height:2.5px;background:#0000E0;"></div>
<div style="left:1810px;top:475px;width:6px;height:8px;background:#A0A0A0;"></div>
<div style="left:276px;top:650px;width:1540px;height:26px;background:#E8E8EC;"></div>
<div style="left:277px;top:650px;width:89px;height:26px;background:#FCFCFC;box-sizing:border-box;border:1.5px solid #BCC5D8"></div>
<div style="left:280px;top:655.61px;font-size:17px;line-height:17px;color:#1E1E1E;white-space:pre;">100 %</div>
<svg style="left:352px;top:660px;" width="9" height="6" viewBox="0 0 9 6"><path d="M0,0 L8,0 L4.0,5 Z" fill="#1B293E"/></svg>
<svg style="left:374px;top:655px;" width="10" height="16" viewBox="0 0 10 16"><path d="M9,0 L9,15 L0,7.5 Z" fill="#868999"/></svg>
<div style="left:510px;top:656px;width:1177px;height:13px;background:#C2C3C9;"></div>
<svg style="left:1764px;top:655px;" width="10" height="16" viewBox="0 0 10 16"><path d="M0,0 L0,15 L9,7.5 Z" fill="#868999"/></svg>
<div class="clip" style="left:276px;top:241px;width:1507px;height:409px">
<div style="left:56px;top:-8.55px;width:20px;font-family:'Liberation Mono',monospace;font-size:17.5px;line-height:19px;color:#2B91AF;letter-spacing:-0.5px;white-space:pre;transform-origin:0 14px;transform:scaleY(1.15)">27</div>
<div style="left:56px;top:17.00px;width:20px;font-family:'Liberation Mono',monospace;font-size:17.5px;line-height:19px;color:#2B91AF;letter-spacing:-0.5px;white-space:pre;transform-origin:0 14px;transform:scaleY(1.15)">28</div>
<div style="left:56px;top:42.55px;width:20px;font-family:'Liberation Mono',monospace;font-size:17.5px;line-height:19px;color:#2B91AF;letter-spacing:-0.5px;white-space:pre;transform-origin:0 14px;transform:scaleY(1.15)">29</div>
<div style="left:56px;top:68.10px;width:20px;font-family:'Liberation Mono',monospace;font-size:17.5px;line-height:19px;color:#2B91AF;letter-spacing:-0.5px;white-space:pre;transform-origin:0 14px;transform:scaleY(1.15)">30</div>
<div style="left:56px;top:93.65px;width:20px;font-family:'Liberation Mono',monospace;font-size:17.5px;line-height:19px;color:#2B91AF;letter-spacing:-0.5px;white-space:pre;transform-origin:0 14px;transform:scaleY(1.15)">31</div>
<div style="left:56px;top:119.20px;width:20px;font-family:'Liberation Mono',monospace;font-size:17.5px;line-height:19px;color:#2B91AF;letter-spacing:-0.5px;white-space:pre;transform-origin:0 14px;transform:scaleY(1.15)">32</div>
<div style="left:56px;top:144.75px;width:20px;font-family:'Liberation Mono',monospace;font-size:17.5px;line-height:19px;color:#2B91AF;letter-spacing:-0.5px;white-space:pre;transform-origin:0 14px;transform:scaleY(1.15)">33</div>
<div style="left:56px;top:170.30px;width:20px;font-family:'Liberation Mono',monospace;font-size:17.5px;line-height:19px;color:#2B91AF;letter-spacing:-0.5px;white-space:pre;transform-origin:0 14px;transform:scaleY(1.15)">34</div>
<div style="left:56px;top:195.85px;width:20px;font-family:'Liberation Mono',monospace;font-size:17.5px;line-height:19px;color:#2B91AF;letter-spacing:-0.5px;white-space:pre;transform-origin:0 14px;transform:scaleY(1.15)">35</div>
<div style="left:56px;top:221.40px;width:20px;font-family:'Liberation Mono',monospace;font-size:17.5px;line-height:19px;color:#2B91AF;letter-spacing:-0.5px;white-space:pre;transform-origin:0 14px;transform:scaleY(1.15)">36</div>
<div style="left:56px;top:246.95px;width:20px;font-family:'Liberation Mono',monospace;font-size:17.5px;line-height:19px;color:#2B91AF;letter-spacing:-0.5px;white-space:pre;transform-origin:0 14px;transform:scaleY(1.15)">37</div>
<div style="left:56px;top:272.50px;width:20px;font-family:'Liberation Mono',monospace;font-size:17.5px;line-height:19px;color:#2B91AF;letter-spacing:-0.5px;white-space:pre;transform-origin:0 14px;transform:scaleY(1.15)">38</div>
<div style="left:56px;top:298.05px;width:20px;font-family:'Liberation Mono',monospace;font-size:17.5px;line-height:19px;color:#2B91AF;letter-spacing:-0.5px;white-space:pre;transform-origin:0 14px;transform:scaleY(1.15)">39</div>
<div style="left:56px;top:323.60px;width:20px;font-family:'Liberation Mono',monospace;font-size:17.5px;line-height:19px;color:#2B91AF;letter-spacing:-0.5px;white-space:pre;transform-origin:0 14px;transform:scaleY(1.15)">40</div>
<div style="left:56px;top:349.15px;width:20px;font-family:'Liberation Mono',monospace;font-size:17.5px;line-height:19px;color:#2B91AF;letter-spacing:-0.5px;white-space:pre;transform-origin:0 14px;transform:scaleY(1.15)">41</div>
<div style="left:56px;top:374.70px;width:20px;font-family:'Liberation Mono',monospace;font-size:17.5px;line-height:19px;color:#2B91AF;letter-spacing:-0.5px;white-space:pre;transform-origin:0 14px;transform:scaleY(1.15)">42</div>
<div style="left:56px;top:400.25px;width:20px;font-family:'Liberation Mono',monospace;font-size:17.5px;line-height:19px;color:#2B91AF;letter-spacing:-0.5px;white-space:pre;transform-origin:0 14px;transform:scaleY(1.15)">43</div>
<div style="left:131px;top:192px;width:1374px;height:25px;box-sizing:border-box;border-top:2.5px solid #E4E4EC;border-bottom:2.5px solid #E4E4EC"></div>
<div style="left:131px;top:115.5px;width:23px;height:25px;background:#DBE0CC"></div>
<div style="left:344px;top:167.30px;width:40px;height:25px;background:#DBE0CC"></div>
<div style="left:131px;top:192.5px;width:23px;height:25px;background:#D6DEC8"></div>
<div style="left:154px;top:192.5px;width:80px;height:25px;background:#C0E4BD"></div>
<div style="left:124px;top:0px;width:1.5px;height:322px;background:#A5A5A5"></div>
<div style="left:124px;top:293px;width:7px;height:1.5px;background:#A5A5A5"></div>
<div style="left:124px;top:340px;width:1.5px;height:36px;background:#A5A5A5"></div>
<div style="left:124px;top:390px;width:1.5px;height:40px;background:#A5A5A5"></div>
<svg style="left:118px;top:-6.05px" width="13" height="13"><rect x="0.75" y="0.75" width="11.5" height="11.5" fill="#fff" stroke="#A5A5A5" stroke-width="1.5"/><rect x="3" y="5.75" width="7" height="1.5" fill="#333"/></svg>
<svg style="left:118px;top:326.10px" width="13" height="13"><rect x="0.75" y="0.75" width="11.5" height="11.5" fill="#fff" stroke="#A5A5A5" stroke-width="1.5"/><rect x="3" y="5.75" width="7" height="1.5" fill="#333"/></svg>
<svg style="left:118px;top:377.20px" width="13" height="13"><rect x="0.75" y="0.75" width="11.5" height="11.5" fill="#fff" stroke="#A5A5A5" stroke-width="1.5"/><rect x="3" y="5.75" width="7" height="1.5" fill="#333"/></svg>
<svg style="left:-2px;top:189px" width="30" height="30"><path d="M10,6.5 Q6,9 7,13.5 Q9,18.5 15.5,18.5 L15.5,21.5 L24.5,15 L16.5,8 L15.5,8 L15.5,11 Q11,11 10.5,7.5 Z" fill="#D0E8CF" stroke="#333" stroke-width="1.3" stroke-linejoin="round"/></svg>
</div>
<div class="clip" style="left:407px;top:241px;width:1376px;height:409px">
<div style="left:-137px;top:-8.55px;font-family:'Liberation Mono',monospace;font-size:17px;line-height:19px;letter-spacing:-0.2px;white-space:pre;transform-origin:0 14px;transform:scaleY(1.13)"><span style="color:#000000">        </span><span style="color:#0000FF">public</span><span style="color:#000000"> MainWindow()</span></div>
<div style="left:-137px;top:17.00px;font-family:'Liberation Mono',monospace;font-size:17px;line-height:19px;letter-spacing:-0.2px;white-space:pre;transform-origin:0 14px;transform:scaleY(1.13)"><span style="color:#000000">        {</span></div>
<div style="left:-137px;top:42.55px;font-family:'Liberation Mono',monospace;font-size:17px;line-height:19px;letter-spacing:-0.2px;white-space:pre;transform-origin:0 14px;transform:scaleY(1.13)"><span style="color:#000000">            InitializeComponent();</span></div>
<div style="left:-137px;top:68.10px;font-family:'Liberation Mono',monospace;font-size:17px;line-height:19px;letter-spacing:-0.2px;white-space:pre;transform-origin:0 14px;transform:scaleY(1.13)"><span style="color:#000000">            </span><span style="color:#0000FF">string</span><span style="color:#000000"> s = </span><span style="color:#A31515">@&quot;Data Source=.\SQLEXPRESS;AttachDbFilename=E:\<span style="font-size:19px;letter-spacing:1px;font-weight:300;display:inline-block;transform-origin:0 14px;transform:scaleY(0.88)">学习资料</span>\<span style="font-size:19px;letter-spacing:1px;font-weight:300;display:inline-block;transform-origin:0 14px;transform:scaleY(0.88)">大三上</span>\<span style="font-size:19px;letter-spacing:1px;font-weight:300;display:inline-block;transform-origin:0 14px;transform:scaleY(0.88)">面向对象的编程</span>\<span style="font-size:19px;letter-spacing:1px;font-weight:300;display:inline-block;transform-origin:0 14px;transform:scaleY(0.88)">第八次上机</span>\STUDENTDATA.mdf;</span></div>
<div style="left:-137px;top:93.65px;font-family:'Liberation Mono',monospace;font-size:17px;line-height:19px;letter-spacing:-0.2px;white-space:pre;transform-origin:0 14px;transform:scaleY(1.13)"><span style="color:#A31515">                     Integrated Security=True;Connect Timeout=30;User Instance=True&quot;</span><span style="color:#000000">;</span></div>
<div style="left:-137px;top:119.20px;font-family:'Liberation Mono',monospace;font-size:17px;line-height:19px;letter-spacing:-0.2px;white-space:pre;transform-origin:0 14px;transform:scaleY(1.13)"><span style="color:#000000">            conn = </span><span style="color:#0000FF">new</span><span style="color:#000000"> </span><span style="color:#2B91AF">SqlConnection</span><span style="color:#000000">(s);</span></div>
<div style="left:-137px;top:144.75px;font-family:'Liberation Mono',monospace;font-size:17px;line-height:19px;letter-spacing:-0.2px;white-space:pre;transform-origin:0 14px;transform:scaleY(1.13)"><span style="color:#000000">            s = </span><span style="color:#A31515">&quot; SELECT * FROM Teacher&quot;</span><span style="color:#000000">;</span></div>
<div style="left:-137px;top:170.30px;font-family:'Liberation Mono',monospace;font-size:17px;line-height:19px;letter-spacing:-0.2px;white-space:pre;transform-origin:0 14px;transform:scaleY(1.13)"><span style="color:#000000">            da = </span><span style="color:#0000FF">new</span><span style="color:#000000"> </span><span style="color:#2B91AF">SqlCommand</span><span style="color:#000000">(s, conn);</span></div>
<div style="left:-137px;top:195.85px;font-family:'Liberation Mono',monospace;font-size:17px;line-height:19px;letter-spacing:-0.2px;white-space:pre;transform-origin:0 14px;transform:scaleY(1.13)"><span style="color:#000000">            conn.Open();</span></div>
<div style="left:-137px;top:221.40px;font-family:'Liberation Mono',monospace;font-size:17px;line-height:19px;letter-spacing:-0.2px;white-space:pre;transform-origin:0 14px;transform:scaleY(1.13)"><span style="color:#000000">            dr = da.ExecuteReader();</span></div>
<div style="left:-137px;top:246.95px;font-family:'Liberation Mono',monospace;font-size:17px;line-height:19px;letter-spacing:-0.2px;white-space:pre;transform-origin:0 14px;transform:scaleY(1.13)"><span style="color:#000000">            button1_click </span></div>
<div style="left:-137px;top:272.50px;font-family:'Liberation Mono',monospace;font-size:17px;line-height:19px;letter-spacing:-0.2px;white-space:pre;transform-origin:0 14px;transform:scaleY(1.13)"><span style="color:#000000">        }</span></div>
<div style="left:-137px;top:323.60px;font-family:'Liberation Mono',monospace;font-size:17px;line-height:19px;letter-spacing:-0.2px;white-space:pre;transform-origin:0 14px;transform:scaleY(1.13)"><span style="color:#000000">        </span><span style="color:#0000FF">private</span><span style="color:#000000"> </span><span style="color:#0000FF">void</span><span style="color:#000000"> button1_click(</span></div>
<div style="left:-137px;top:374.70px;font-family:'Liberation Mono',monospace;font-size:17px;line-height:19px;letter-spacing:-0.2px;white-space:pre;transform-origin:0 14px;transform:scaleY(1.13)"><span style="color:#000000">            </span><span style="color:#0000FF">if</span><span style="color:#000000"> (dr.Read())</span></div>
<div style="left:74px;top:342px;width:2px;height:2px;background:#888"></div>
<div style="left:78px;top:342px;width:2px;height:2px;background:#888"></div>
<div style="left:82px;top:342px;width:2px;height:2px;background:#888"></div>
<svg style="left:126px;top:194px" width="23" height="23"><circle cx="11.5" cy="11.5" r="10.5" fill="#E51400"/><path d="M7,7 L16,16 M16,7 L7,16" stroke="#fff" stroke-width="2.8"/></svg>
<svg style="left:136px;top:217px" width="20" height="20"><path d="M1,0 L18,19 L1,19 Z" fill="#DEE3F1"/></svg>
<div style="left:117px;top:236px;width:599px;height:200px;background:#FFFFFF;box-sizing:border-box;border-left:1px solid #D3D9E7;border-right:1px solid #D3D9E7"></div>
<div style="left:117px;top:236px;width:599px;height:34px;background:#DEE3F1"></div>
</div>
<div style="left:539px;top:485.76px;font-size:18px;line-height:18px;color:#1E1E1E;white-space:pre;">用户未处理的异常</div>
<svg style="left:1069px;top:485px;" width="12" height="18" viewBox="0 0 12 18"><rect x="3" y="1" width="6" height="9" fill="none" stroke="#444" stroke-width="1.6"/><rect x="6.5" y="1" width="2" height="9" fill="#444"/><path d="M0,10.5 L12,10.5 M6,10 L6,17" stroke="#444" stroke-width="1.6"/></svg>
<svg style="left:1096px;top:486px;" width="21" height="17" viewBox="0 0 21 17"><path d="M1,1 L20,16 M20,1 L1,16" stroke="#444" stroke-width="4.2" stroke-linecap="butt"/></svg>
<div style="left:540px;top:527.56px;font-size:18px;line-height:18px;color:#1E1E1E;white-space:pre;"><b style="letter-spacing:0.3px">System.Data.SqlClient.SqlException:</b>“尝试为文件 E:\学习资料\大三</div>
<div style="left:540px;top:550.56px;font-size:18px;line-height:18px;color:#1E1E1E;white-space:pre;">上\面向对象的编程\第八次上机\STUDENTDATA.mdf 附加自动命名的</div>
<div style="left:540px;top:573.56px;font-size:18px;line-height:18px;color:#1E1E1E;white-space:pre;">数据库，但失败。已存在同名的数据库，或指定的文件无法打开或位于</div>
<div style="left:540px;top:596.56px;font-size:18px;line-height:18px;color:#1E1E1E;white-space:pre;">UNC 共享目录中。”</div>
<div style="left:1828px;top:174px;width:45px;height:503px;background:#8E9BBC;"></div>
<div style="left:1830px;top:176px;width:41px;height:33px;background:#4D6082;"></div>
<svg style="left:1846px;top:186px;" width="15" height="15" viewBox="0 0 15 15"><path d="M1,2.1 L14,14.0 M14,2.1 L1,14.0" stroke="#D5DAE6" stroke-width="1.8"/></svg>
<div style="left:1830px;top:209px;width:41px;height:466px;background:#FFFFFF;"></div>
<div style="left:1830px;top:209px;width:16px;height:40px;background:#CFD6E5;"></div>
<div style="left:1846px;top:209px;width:25px;height:278px;background:#E8E8EC;"></div>
<svg style="left:1849px;top:222px;" width="20" height="14" viewBox="0 0 20 14"><path d="M2,12 L10,3 L18,12" fill="none" stroke="#868999" stroke-width="4"/></svg>
<div style="left:1847px;top:243px;width:23px;height:124px;background:#C2C3C9;"></div>
<svg style="left:1849px;top:456px;" width="20" height="14" viewBox="0 0 20 14"><path d="M2,2 L10,11 L18,2" fill="none" stroke="#868999" stroke-width="4"/></svg>
<div style="left:1830px;top:280px;width:16px;height:1.5px;background:#8E9BBC;"></div>
<div style="left:1830px;top:313px;width:16px;height:1.5px;background:#8E9BBC;"></div>
<svg style="left:1837px;top:327px;" width="8" height="8" viewBox="0 0 8 8"><path d="M7,0 L7,7 L0,7 Z" fill="#555"/></svg>
<svg style="left:1837px;top:391px;" width="8" height="8" viewBox="0 0 8 8"><path d="M7,0 L7,7 L0,7 Z" fill="#555"/></svg>
<div style="left:1830px;top:487px;width:41px;height:3px;background:#D0D3DC;"></div>
<div style="left:1831px;top:497px;width:40px;height:32px;background:#4D6082;"></div>
<svg style="left:1834px;top:504px;" width="12" height="16" viewBox="0 0 12 16"><path d="M11,1 L11,15 L1,8 Z" fill="#000"/></svg>
<svg style="left:1852px;top:504px;" width="12" height="16" viewBox="0 0 12 16"><path d="M1,1 L1,15 L11,8 Z" fill="#000"/></svg>
<div style="left:1846px;top:530px;width:25px;height:145px;background:#E8E8EC;"></div>
<div style="left:1830px;top:530px;width:16px;height:34px;background:#F3F3F3;"></div>
<div style="left:1830px;top:564px;width:16px;height:1.5px;background:#C8CCD8;"></div>
<div style="left:1830px;top:607px;width:16px;height:1.5px;background:#C8CCD8;"></div>
<div style="left:1830px;top:641px;width:16px;height:1.5px;background:#C8CCD8;"></div>
<div style="left:1830px;top:608px;width:16px;height:33px;background:#F3F3F3;"></div>
<svg style="left:1849px;top:553px;" width="20" height="14" viewBox="0 0 20 14"><path d="M2,12 L10,3 L18,12" fill="none" stroke="#868999" stroke-width="4"/></svg>
<div style="left:1847px;top:581px;width:22px;height:26px;background:#C2C3C9;"></div>
<svg style="left:1849px;top:637px;" width="20" height="14" viewBox="0 0 20 14"><path d="M2,2 L10,11 L18,2" fill="none" stroke="#868999" stroke-width="4"/></svg>
<div style="left:1911px;top:174px;width:9px;height:161px;background:#4D6082;"></div>
<div style="left:1911px;top:355px;width:9px;height:124px;background:#4D6082;"></div>
<div style="left:1903px;top:175px;font-size:18px;line-height:18px;color:#F0F2F8;white-space:pre;transform-origin:0 0;transform:rotate(90deg)">解决方案资源管理器</div>
<div style="left:1903px;top:355px;font-size:18px;line-height:18px;color:#F0F2F8;white-space:pre;transform-origin:0 0;transform:rotate(90deg)">团队资源管理器</div>
<div style="left:274px;top:687px;width:791px;height:258px;background:#8E9BBC;"></div>
<div style="left:276px;top:689px;width:787px;height:33px;background:#4D6082;"></div>
<div style="left:283px;top:697.76px;font-size:18px;line-height:18px;color:#FFFFFF;white-space:pre;">自动窗口</div>
<svg style="left:986px;top:702px;" width="13" height="7" viewBox="0 0 13 7"><path d="M0,0 L12,0 L6,6 Z" fill="#D5DAE6"/></svg>
<svg style="left:1013px;top:696px;" width="12" height="18" viewBox="0 0 12 18"><rect x="3" y="1" width="6" height="9" fill="none" stroke="#D5DAE6" stroke-width="1.6"/><rect x="6.5" y="1" width="2" height="9" fill="#D5DAE6"/><path d="M0,10.5 L12,10.5 M6,10 L6,17" stroke="#D5DAE6" stroke-width="1.6"/></svg>
<svg style="left:1038px;top:697px;" width="15" height="15" viewBox="0 0 15 15"><path d="M1,2.1 L14,14.0 M14,2.1 L1,14.0" stroke="#D5DAE6" stroke-width="2"/></svg>
<div style="left:276px;top:722px;width:787px;height:221px;background:#FFFFFF;"></div>
<div style="left:288px;top:722px;width:1px;height:28px;background:#CCCEDB;"></div>
<div style="left:276px;top:750px;width:761px;height:1.5px;background:#C9CCD6;"></div>
<div style="left:537px;top:722px;width:1px;height:133px;background:#E0E0E6;"></div>
<div style="left:911px;top:722px;width:1px;height:133px;background:#E0E0E6;"></div>
<div style="left:294px;top:728.76px;font-size:18px;line-height:18px;color:#1E1E1E;white-space:pre;">名称</div>
<div style="left:543px;top:728.76px;font-size:18px;line-height:18px;color:#1E1E1E;white-space:pre;">值</div>
<div style="left:916px;top:728.76px;font-size:18px;line-height:18px;color:#1E1E1E;white-space:pre;">类型</div>
<div style="left:1037px;top:722px;width:26px;height:221px;background:#E8E8EC;"></div>
<svg style="left:1044px;top:732px;" width="14" height="8" viewBox="0 0 14 8"><path d="M0,7 L13,7 L6.5,0 Z" fill="#C8CAD2"/></svg>
<svg style="left:1044px;top:926px;" width="14" height="8" viewBox="0 0 14 8"><path d="M0,0 L13,0 L6.5,7 Z" fill="#C8CAD2"/></svg>
<div style="left:289px;top:777px;width:748px;height:1px;background:#E6E6EB;"></div>
<svg style="left:297px;top:757px;" width="8" height="13" viewBox="0 0 8 13"><path d="M1.5,1.5 L6.5,6.5 L1.5,11.5 Z" fill="none" stroke="#1E1E1E" stroke-width="1.4"/></svg>
<svg style="left:316px;top:754px;" width="24" height="22" viewBox="0 0 24 22"><path d="M2,7 L11,2 L18,6 L18,12 L9,17 L2,13 Z" fill="#00539C"/><path d="M2,7 L11,2 L18,6 L9,11 Z" fill="#fff" opacity="0.0"/><path d="M5,7.5 L11,4.3 L14.5,6.3 L8.5,9.5 Z" fill="#fff"/><rect x="15" y="14" width="8" height="7" fill="#333"/><path d="M16.5,14 L16.5,12 Q19,9.5 21.5,12 L21.5,14" fill="none" stroke="#333" stroke-width="1.5"/><rect x="18" y="16" width="2" height="2.5" fill="#fff"/></svg>
<div style="left:344px;top:757.26px;font-size:18px;line-height:18px;color:#1E1E1E;white-space:pre;">conn</div>
<div class="clip" style="left:543px;top:751.26px;width:362px;height:30px"><div style="left:0;top:6px;font-size:18px;line-height:18px;color:#1E1E1E;white-space:pre;letter-spacing:-0.4px">{System.Data.SqlClient.SqlConnection}</div></div>
<div class="clip" style="left:916px;top:751.26px;width:121px;height:30px"><div style="left:0;top:6px;font-size:18px;line-height:18px;color:#1E1E1E;white-space:pre;letter-spacing:-0.4px">System.Data.SqlClient.SqlConnection</div></div>
<div style="left:289px;top:803px;width:748px;height:1px;background:#E6E6EB;"></div>
<svg style="left:297px;top:783px;" width="8" height="13" viewBox="0 0 8 13"><path d="M1.5,1.5 L6.5,6.5 L1.5,11.5 Z" fill="none" stroke="#1E1E1E" stroke-width="1.4"/></svg>
<svg style="left:316px;top:780px;" width="24" height="22" viewBox="0 0 24 22"><path d="M2,7 L11,2 L18,6 L18,12 L9,17 L2,13 Z" fill="#00539C"/><path d="M2,7 L11,2 L18,6 L9,11 Z" fill="#fff" opacity="0.0"/><path d="M5,7.5 L11,4.3 L14.5,6.3 L8.5,9.5 Z" fill="#fff"/><rect x="15" y="14" width="8" height="7" fill="#333"/><path d="M16.5,14 L16.5,12 Q19,9.5 21.5,12 L21.5,14" fill="none" stroke="#333" stroke-width="1.5"/><rect x="18" y="16" width="2" height="2.5" fill="#fff"/></svg>
<div style="left:344px;top:783.26px;font-size:18px;line-height:18px;color:#1E1E1E;white-space:pre;">da</div>
<div class="clip" style="left:543px;top:777.26px;width:362px;height:30px"><div style="left:0;top:6px;font-size:18px;line-height:18px;color:#1E1E1E;white-space:pre;letter-spacing:-0.4px">{System.Data.SqlClient.SqlCommand}</div></div>
<div class="clip" style="left:916px;top:777.26px;width:121px;height:30px"><div style="left:0;top:6px;font-size:18px;line-height:18px;color:#1E1E1E;white-space:pre;letter-spacing:-0.4px">System.Data.SqlClient.SqlCommand</div></div>
<div style="left:289px;top:829px;width:748px;height:1px;background:#E6E6EB;"></div>
<svg style="left:316px;top:806px;" width="24" height="22" viewBox="0 0 24 22"><path d="M2,7 L11,2 L18,6 L18,12 L9,17 L2,13 Z" fill="#00539C"/><path d="M2,7 L11,2 L18,6 L9,11 Z" fill="#fff" opacity="0.0"/><path d="M5,7.5 L11,4.3 L14.5,6.3 L8.5,9.5 Z" fill="#fff"/></svg>
<div style="left:344px;top:809.26px;font-size:18px;line-height:18px;color:#1E1E1E;white-space:pre;">s</div>
<div class="clip" style="left:543px;top:803.26px;width:362px;height:30px"><div style="left:0;top:6px;font-size:18px;line-height:18px;color:#1E1E1E;white-space:pre;letter-spacing:-0.4px">&quot; SELECT * FROM Teacher&quot;</div></div>
<div class="clip" style="left:916px;top:803.26px;width:121px;height:30px"><div style="left:0;top:6px;font-size:18px;line-height:18px;color:#1E1E1E;white-space:pre;letter-spacing:-0.4px">string</div></div>
<svg style="left:870px;top:807px;" width="22" height="20" viewBox="0 0 22 20"><circle cx="8" cy="7.5" r="5.5" fill="none" stroke="#333" stroke-width="1.8"/><path d="M12,11.5 L18,17.5" stroke="#333" stroke-width="2.6"/></svg>
<svg style="left:896px;top:815px;" width="10" height="6" viewBox="0 0 10 6"><path d="M0,0 L9,0 L4.5,5 Z" fill="#333"/></svg>
<div style="left:289px;top:855px;width:748px;height:1px;background:#E6E6EB;"></div>
<svg style="left:297px;top:835px;" width="8" height="13" viewBox="0 0 8 13"><path d="M1.5,1.5 L6.5,6.5 L1.5,11.5 Z" fill="none" stroke="#1E1E1E" stroke-width="1.4"/></svg>
<svg style="left:316px;top:832px;" width="24" height="22" viewBox="0 0 24 22"><path d="M2,7 L11,2 L18,6 L18,12 L9,17 L2,13 Z" fill="#00539C"/><path d="M2,7 L11,2 L18,6 L9,11 Z" fill="#fff" opacity="0.0"/><path d="M5,7.5 L11,4.3 L14.5,6.3 L8.5,9.5 Z" fill="#fff"/></svg>
<div style="left:344px;top:835.26px;font-size:18px;line-height:18px;color:#1E1E1E;white-space:pre;">this</div>
<div class="clip" style="left:543px;top:829.26px;width:362px;height:30px"><div style="left:0;top:6px;font-size:18px;line-height:18px;color:#1E1E1E;white-space:pre;letter-spacing:-0.4px">{_9_3.MainWindow}</div></div>
<div class="clip" style="left:916px;top:829.26px;width:121px;height:30px"><div style="left:0;top:6px;font-size:18px;line-height:18px;color:#1E1E1E;white-space:pre;letter-spacing:-0.4px">_9_3.MainWindow</div></div>
<svg style="left:870px;top:833px;" width="22" height="20" viewBox="0 0 22 20"><circle cx="8" cy="7.5" r="5.5" fill="none" stroke="#333" stroke-width="1.8"/><path d="M12,11.5 L18,17.5" stroke="#333" stroke-width="2.6"/></svg>
<svg style="left:896px;top:841px;" width="10" height="6" viewBox="0 0 10 6"><path d="M0,0 L9,0 L4.5,5 Z" fill="#333"/></svg>
<div style="left:276px;top:943px;width:787px;height:2px;background:#8E9BBC;"></div>
<div style="left:274px;top:943px;width:91px;height:32px;background:#8E9BBC;"></div>
<div style="left:276px;top:943px;width:87px;height:30px;background:#FFFFFF;"></div>
<div style="left:284px;top:950.76px;font-size:18px;line-height:18px;color:#1E1E1E;white-space:pre;">自动窗口</div>
<div style="left:365px;top:945px;width:89px;height:30px;background:#4D6082;"></div>
<div style="left:375px;top:951.76px;font-size:18px;line-height:18px;color:#FFFFFF;white-space:pre;">局部变量</div>
<div style="left:456px;top:945px;width:71px;height:30px;background:#4D6082;"></div>
<div style="left:466px;top:951.76px;font-size:18px;line-height:18px;color:#FFFFFF;white-space:pre;">监视 1</div>
<div style="left:1074px;top:687px;width:799px;height:258px;background:#8E9BBC;"></div>
<div style="left:1076px;top:689px;width:795px;height:33px;background:#FFF29D;"></div>
<div style="left:1082px;top:697.76px;font-size:18px;line-height:18px;color:#1E1E1E;white-space:pre;">命令窗口</div>
<svg style="left:1795px;top:702px;" width="13" height="7" viewBox="0 0 13 7"><path d="M0,0 L12,0 L6,6 Z" fill="#1E1E1E"/></svg>
<svg style="left:1822px;top:696px;" width="12" height="18" viewBox="0 0 12 18"><rect x="3" y="1" width="6" height="9" fill="none" stroke="#1E1E1E" stroke-width="1.6"/><rect x="6.5" y="1" width="2" height="9" fill="#1E1E1E"/><path d="M0,10.5 L12,10.5 M6,10 L6,17" stroke="#1E1E1E" stroke-width="1.6"/></svg>
<svg style="left:1847px;top:697px;" width="15" height="15" viewBox="0 0 15 15"><path d="M1,2.1 L14,14.0 M14,2.1 L1,14.0" stroke="#1E1E1E" stroke-width="2"/></svg>
<div style="left:1076px;top:722px;width:795px;height:221px;background:#E8E8EC;"></div>
<svg style="left:1079px;top:726px;" width="9" height="14" viewBox="0 0 9 14"><path d="M1.5,1.5 L7,7 L1.5,12.5" fill="none" stroke="#1E1E1E" stroke-width="1.2"/></svg>
<svg style="left:1851px;top:731px;" width="14" height="8" viewBox="0 0 14 8"><path d="M0,7 L13,7 L6.5,0 Z" fill="#868999"/></svg>
<div style="left:1852px;top:747px;width:14px;height:128px;background:#C2C3C9;"></div>
<svg style="left:1851px;top:899px;" width="14" height="8" viewBox="0 0 14 8"><path d="M0,0 L13,0 L6.5,7 Z" fill="#868999"/></svg>
<svg style="left:1084px;top:922px;" width="8" height="13" viewBox="0 0 8 13"><path d="M7,0 L7,12 L0,6 Z" fill="#C8CAD2"/></svg>
<svg style="left:1829px;top:922px;" width="8" height="13" viewBox="0 0 8 13"><path d="M0,0 L0,12 L7,6 Z" fill="#C8CAD2"/></svg>
<div style="left:1074px;top:945px;width:89px;height:30px;background:#4D6082;"></div>
<div style="left:1084px;top:951.76px;font-size:18px;line-height:18px;color:#FFFFFF;white-space:pre;">调用堆栈</div>
<div style="left:1165px;top:945px;width:54px;height:30px;background:#4D6082;"></div>
<div style="left:1175px;top:951.76px;font-size:18px;line-height:18px;color:#FFFFFF;white-space:pre;">断点</div>
<div style="left:1221px;top:945px;width:90px;height:30px;background:#4D6082;"></div>
<div style="left:1231px;top:951.76px;font-size:18px;line-height:18px;color:#FFFFFF;white-space:pre;">异常设置</div>
<div style="left:1402px;top:945px;width:89px;height:30px;background:#4D6082;"></div>
<div style="left:1412px;top:951.76px;font-size:18px;line-height:18px;color:#FFFFFF;white-space:pre;">即时窗口</div>
<div style="left:1493px;top:945px;width:54px;height:30px;background:#4D6082;"></div>
<div style="left:1503px;top:951.76px;font-size:18px;line-height:18px;color:#FFFFFF;white-space:pre;">输出</div>
<div style="left:1310px;top:943px;width:93px;height:32px;background:#8E9BBC;"></div>
<div style="left:1312px;top:943px;width:89px;height:30px;background:#FFFFFF;"></div>
<div style="left:1321px;top:950.76px;font-size:18px;line-height:18px;color:#1E1E1E;white-space:pre;">命令窗口</div>
<svg style="left:5px;top:993px;" width="28" height="19" viewBox="0 0 28 19"><path d="M6,2 L26,2 L22,17 L2,17 Z" fill="none" stroke="#FFFFFF" stroke-width="1.8"/></svg>
<div style="left:42px;top:993.26px;font-size:18px;line-height:18px;color:#FFFFFF;white-space:pre;">就绪</div>
<div style="left:779px;top:993.26px;font-size:18px;line-height:18px;color:#FFFFFF;white-space:pre;">行 35</div>
<div style="left:918px;top:993.26px;font-size:18px;line-height:18px;color:#FFFFFF;white-space:pre;">列 13</div>
<div style="left:1055px;top:993.26px;font-size:18px;line-height:18px;color:#FFFFFF;white-space:pre;">字符 13</div>
<div style="left:1260px;top:993.26px;font-size:18px;line-height:18px;color:#FFFFFF;white-space:pre;">Ins</div>
<svg style="left:1702px;top:992px;" width="16" height="20" viewBox="0 0 16 20"><path d="M8,2 L8,18 M2,8 L8,2 L14,8" fill="none" stroke="#E8E8E8" stroke-width="2.8"/></svg>
<div style="left:1732px;top:993.26px;font-size:18px;line-height:18px;color:#FFFFFF;white-space:pre;">添加到源代码管理</div>
<svg style="left:1885px;top:997px;" width="13" height="8" viewBox="0 0 13 8"><path d="M0,7 L12,7 L6,0 Z" fill="#FFFFFF"/></svg>
<div style="left:1912px;top:1020px;width:2px;height:11px;background:#666;"></div>
<div style="left:1832px;top:1026.26px;font-size:18px;line-height:18px;color:#FFFFFF;white-space:pre;">10:30</div>
</body></html>
